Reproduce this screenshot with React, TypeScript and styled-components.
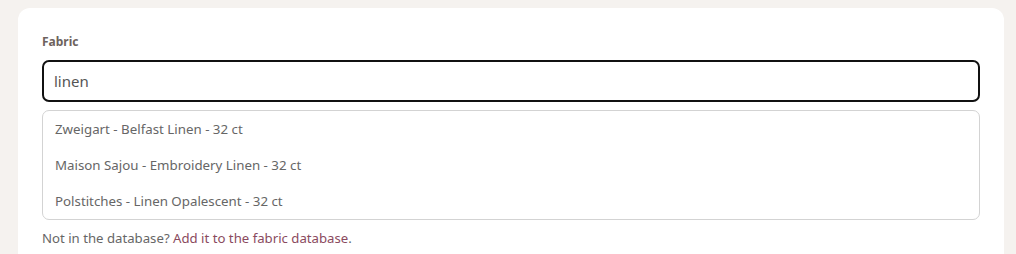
import React, { useState } from "react";
import styled, { createGlobalStyle } from "styled-components";

const GlobalStyle = createGlobalStyle`
  html, body {
    margin: 0;
    padding: 0;
    background: #f5f2ef;
    font-family: "Noto Sans", "Open Sans", sans-serif;
  }
`;

const Page = styled.div`
  padding: 8px 12px 0 18px;
  height: 254px;
  box-sizing: border-box;
  overflow: hidden;
`;

const Card = styled.div`
  background: #ffffff;
  border-radius: 12px 12px 0 0;
  padding: 26px 24px 40px 24px;
  height: 300px;
  box-sizing: border-box;
`;

const Label = styled.label`
  display: block;
  font-size: 12px;
  font-weight: 700;
  color: #6d625d;
  margin-bottom: 10px;
  line-height: 16px;
`;

const Input = styled.input`
  display: block;
  width: 100%;
  box-sizing: border-box;
  height: 42px;
  border: 2px solid #111111;
  border-radius: 7px;
  padding: 0 10px;
  font-family: inherit;
  font-size: 15px;
  color: #555555;
  outline: none;
`;

const Suggestions = styled.ul`
  list-style: none;
  margin: 8px 0 0 0;
  padding: 0;
  border: 1px solid #d3d3d3;
  border-radius: 7px;
`;

const Suggestion = styled.li`
  font-size: 13.3px;
  color: #666666;
  line-height: 36px;
  height: 36px;
  padding: 0 12px;
`;

const Note = styled.p`
  margin: 9px 0 0 0;
  font-size: 13.2px;
  color: #666666;
  line-height: 18px;
`;

const Link = styled.a`
  color: #8a4a5e;
  text-decoration: none;
`;

const results = [
  "Zweigart - Belfast Linen - 32 ct",
  "Maison Sajou - Embroidery Linen - 32 ct",
  "Polstitches - Linen Opalescent - 32 ct",
];

export default function App() {
  const [query, setQuery] = useState("linen");
  return (
    <>
      <GlobalStyle />
      <Page>
        <Card>
          <Label htmlFor="fabric">Fabric</Label>
          <Input
            id="fabric"
            value={query}
            autoFocus
            onChange={(e) => setQuery(e.target.value)}
          />
          <Suggestions>
            {results.map((r) => (
              <Suggestion key={r}>{r}</Suggestion>
            ))}
          </Suggestions>
          <Note>
            Not in the database? <Link href="#">Add it to the fabric database</Link>.
          </Note>
        </Card>
      </Page>
    </>
  );
}
